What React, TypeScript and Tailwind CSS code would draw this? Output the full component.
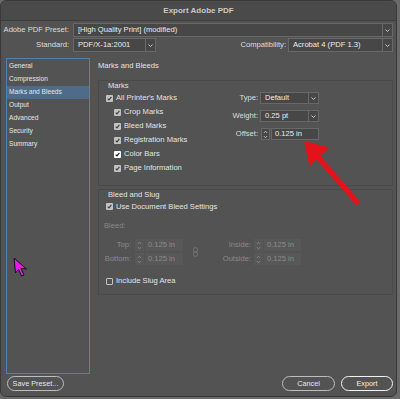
import React from "react";

function Chevron() {
  return (
    <svg width="5" height="3" viewBox="0 0 5 3">
      <path d="M0.5 0.5 L2.5 2.5 L4.5 0.5" fill="none" stroke="#d6d6d6" strokeWidth="0.9" />
    </svg>
  );
}

function SpinIcon({ color }: { color: string }) {
  return (
    <svg width="5" height="9" viewBox="0 0 5 9">
      <path d="M0.8 3 L2.5 1.2 L4.2 3" fill="none" stroke={color} strokeWidth="0.8" />
      <path d="M0.8 6 L2.5 7.8 L4.2 6" fill="none" stroke={color} strokeWidth="0.8" />
    </svg>
  );
}

function Dropdown({ text, className }: { text: string; className: string }) {
  return (
    <div className={`flex items-stretch border border-[#686868] bg-[#474747] ${className}`}>
      <div className="flex-1 flex items-center pl-[4px] text-[#ececec] whitespace-nowrap overflow-hidden">
        {text}
      </div>
      <div className="w-[10px] border-l border-[#686868] flex items-center justify-center">
        <Chevron />
      </div>
    </div>
  );
}

function SpinField({ text, disabled, className }: { text: string; disabled?: boolean; className: string }) {
  return (
    <div className={`flex gap-[1px] ${className}`}>
      <div
        className={`w-[9px] flex items-center justify-center ${
          disabled ? "bg-[#585858]" : "bg-[#474747] border border-[#686868]"
        }`}
      >
        <SpinIcon color={disabled ? "#8a8a8a" : "#d6d6d6"} />
      </div>
      <div
        className={`flex-1 flex items-center pl-[3px] whitespace-nowrap ${
          disabled ? "bg-[#585858] text-[#8c8c8c]" : "bg-[#474747] border border-[#686868] text-[#ececec]"
        }`}
      >
        {text}
      </div>
    </div>
  );
}

function Check({ checked, bright }: { checked: boolean; bright?: boolean }) {
  return (
    <div
      className={`w-[7px] h-[7px] rounded-[1px] flex items-center justify-center shrink-0 ${
        checked ? (bright ? "bg-white" : "bg-[#c2c2c2]") : "border border-[#c4c4c4]"
      }`}
    >
      {checked && (
        <svg width="5" height="5" viewBox="0 0 5 5">
          <path
            d="M0.7 2.6 L2 3.9 L4.4 0.9"
            fill="none"
            stroke={bright ? "#111" : "#3c3c3c"}
            strokeWidth="1.1"
          />
        </svg>
      )}
    </div>
  );
}

function CheckRow({ label, checked, bright, className }: { label: string; checked: boolean; bright?: boolean; className?: string }) {
  return (
    <div className={`flex items-center gap-[3px] ${className ?? ""}`}>
      <Check checked={checked} bright={bright} />
      <span className="text-[#e4e4e4] whitespace-nowrap">{label}</span>
    </div>
  );
}

export default function App() {
  const items = ["General", "Compression", "Marks and Bleeds", "Output", "Advanced", "Security", "Summary"];
  return (
    <div className="relative w-[400px] h-[399px] bg-[#6a6a6a] overflow-hidden font-['Liberation_Sans',Arial,sans-serif] text-[7.6px] leading-none">
      <div className="w-[397px] h-[397px] rounded-[6px] bg-[#535353] border border-[#3a3a3a] overflow-hidden flex flex-col">
        {/* Title bar */}
        <div className="h-[20px] shrink-0 bg-[#4a4a4a] border-b border-[#3d3d3d] flex items-center justify-center text-[8px] text-[#c9c9c9] font-semibold">
          Export Adobe PDF
        </div>
        <div className="flex flex-col pl-[4px] pr-[3px]">
          {/* Row 1 */}
          <div className="mt-[2px] h-[14px] flex items-stretch">
            <div className="w-[64px] flex items-center justify-end text-[#dedede] whitespace-nowrap">Adobe PDF Preset:</div>
            <Dropdown text="[High Quality Print] (modified)" className="ml-[4px] flex-1" />
          </div>
          {/* Row 2 */}
          <div className="mt-[1px] h-[14px] flex items-stretch">
            <div className="w-[64px] flex items-center justify-end text-[#dedede]">Standard:</div>
            <Dropdown text="PDF/X-1a:2001" className="ml-[4px] w-[83px]" />
            <div className="flex-1 flex items-center justify-end text-[#dedede] pr-[2px]">Compatibility:</div>
            <Dropdown text="Acrobat 4 (PDF 1.3)" className="w-[105px]" />
          </div>
          {/* Main */}
          <div className="mt-[6px] h-[316px] flex">
            <div className="ml-[1px] w-[84px] border border-[#4f82b4] pt-[1px] flex flex-col text-[6.6px] text-[#e6e6e6]">
              {items.map((it) => (
                <div
                  key={it}
                  className={`h-[13px] flex items-center pl-[2px] ${it === "Marks and Bleeds" ? "bg-[#4e6b8a]" : ""}`}
                >
                  {it}
                </div>
              ))}
            </div>
            <div className="ml-[8px] flex-1 flex flex-col">
              <div className="mt-[3px] h-[10px] flex items-center text-[#e4e4e4]">Marks and Bleeds</div>
              {/* Marks box */}
              <div className="mt-[9px] h-[106px] border border-[#4a4a4a] pl-[7px] flex flex-col">
                <div className="h-[10px] flex items-center ml-[2px] text-[#e4e4e4]">Marks</div>
                <div className="flex">
                  <div className="w-[113px] flex flex-col">
                    <CheckRow label="All Printer's Marks" checked className="h-[14px]" />
                    <CheckRow label="Crop Marks" checked className="h-[14px] ml-[8px]" />
                    <CheckRow label="Bleed Marks" checked className="h-[14px] ml-[8px]" />
                    <CheckRow label="Registration Marks" checked className="h-[14px] ml-[8px]" />
                    <CheckRow label="Color Bars" checked bright className="h-[14px] ml-[8px]" />
                    <CheckRow label="Page Information" checked className="h-[14px] ml-[8px]" />
                  </div>
                  <div className="mt-[1px] flex flex-col gap-[6px]">
                    <div className="h-[12px] flex items-stretch">
                      <div className="w-[39px] flex items-center justify-end text-[#dedede]">Type:</div>
                      <Dropdown text="Default" className="ml-[2px] w-[59px]" />
                    </div>
                    <div className="h-[12px] flex items-stretch">
                      <div className="w-[39px] flex items-center justify-end text-[#dedede]">Weight:</div>
                      <Dropdown text="0.25 pt" className="ml-[2px] w-[59px]" />
                    </div>
                    <div className="h-[12px] flex items-stretch">
                      <div className="w-[39px] flex items-center justify-end text-[#dedede]">Offset:</div>
                      <SpinField text="0.125 in" className="ml-[3px] w-[58px]" />
                    </div>
                  </div>
                </div>
              </div>
              {/* Bleed and Slug box */}
              <div className="mt-[3px] h-[106px] border border-[#4a4a4a] pl-[7px] flex flex-col">
                <div className="h-[10px] flex items-center ml-[2px] text-[#e4e4e4]">Bleed and Slug</div>
                <CheckRow label="Use Document Bleed Settings" checked className="h-[13px]" />
                <div className="mt-[8px] h-[10px] flex items-center ml-[-2px] text-[#8a8a8a]">Bleed:</div>
                <div className="mt-[8px] flex ml-[-5px]">
                  <div className="flex flex-col gap-[2px]">
                    <div className="h-[12px] flex items-stretch">
                      <div className="w-[30px] flex items-center justify-end text-[#8a8a8a]">Top:</div>
                      <SpinField text="0.125 in" disabled className="ml-[4px] w-[48px]" />
                    </div>
                    <div className="h-[12px] flex items-stretch">
                      <div className="w-[30px] flex items-center justify-end text-[#8a8a8a]">Bottom:</div>
                      <SpinField text="0.125 in" disabled className="ml-[4px] w-[48px]" />
                    </div>
                  </div>
                  <div className="w-[39px] flex items-center pl-[10px]">
                    <svg width="5" height="10" viewBox="0 0 5 10">
                      <rect x="0.6" y="0.6" width="3.8" height="4.6" rx="1.8" fill="none" stroke="#7a7a7a" strokeWidth="0.9" />
                      <rect x="0.6" y="4.8" width="3.8" height="4.6" rx="1.8" fill="none" stroke="#7a7a7a" strokeWidth="0.9" />
                    </svg>
                  </div>
                  <div className="flex flex-col gap-[2px]">
                    <div className="h-[12px] flex items-stretch">
                      <div className="w-[29px] flex items-center justify-end text-[#8a8a8a]">Inside:</div>
                      <SpinField text="0.125 in" disabled className="ml-[3px] w-[47px]" />
                    </div>
                    <div className="h-[12px] flex items-stretch">
                      <div className="w-[29px] flex items-center justify-end text-[#8a8a8a]">Outside:</div>
                      <SpinField text="0.125 in" disabled className="ml-[3px] w-[47px]" />
                    </div>
                  </div>
                </div>
                <CheckRow label="Include Slug Area" checked={false} className="mt-[10px] h-[12px]" />
              </div>
            </div>
          </div>
          {/* Bottom buttons */}
          <div className="mt-[2px] h-[15px] flex text-[7.3px]">
            <div className="ml-[2px] w-[57px] rounded-full border border-[#bdbdbd] flex items-center justify-center text-[#e6e6e6]">
              Save Preset...
            </div>
            <div className="flex-1" />
            <div className="w-[53px] rounded-full border border-[#bdbdbd] flex items-center justify-center text-[#e6e6e6]">
              Cancel
            </div>
            <div className="ml-[6px] w-[52px] rounded-full border-[1.5px] border-[#f2f2f2] flex items-center justify-center text-[#f0f0f0]">
              Export
            </div>
          </div>
        </div>
      </div>
      {/* Red annotation arrow */}
      <svg className="absolute left-0 top-0 pointer-events-none" width="400" height="399" viewBox="0 0 400 399">
        <line x1="357" y1="202" x2="316" y2="155" stroke="#e3131b" strokeWidth="5.5" strokeLinecap="round" />
        <polygon points="305,142 310,165 328,148" fill="#e3131b" stroke="#e3131b" strokeWidth="1.5" strokeLinejoin="round" />
      </svg>
      {/* Magenta cursor */}
      <svg className="absolute left-[13px] top-[257px] pointer-events-none" width="16" height="22" viewBox="0 0 16 22">
        <polygon
          points="1,1 2.5,16 5.5,12.5 8.5,19 11,18 8,11.5 13.5,12"
          fill="#e11de3"
          stroke="#111"
          strokeWidth="1"
          strokeLinejoin="round"
        />
      </svg>
    </div>
  );
}
